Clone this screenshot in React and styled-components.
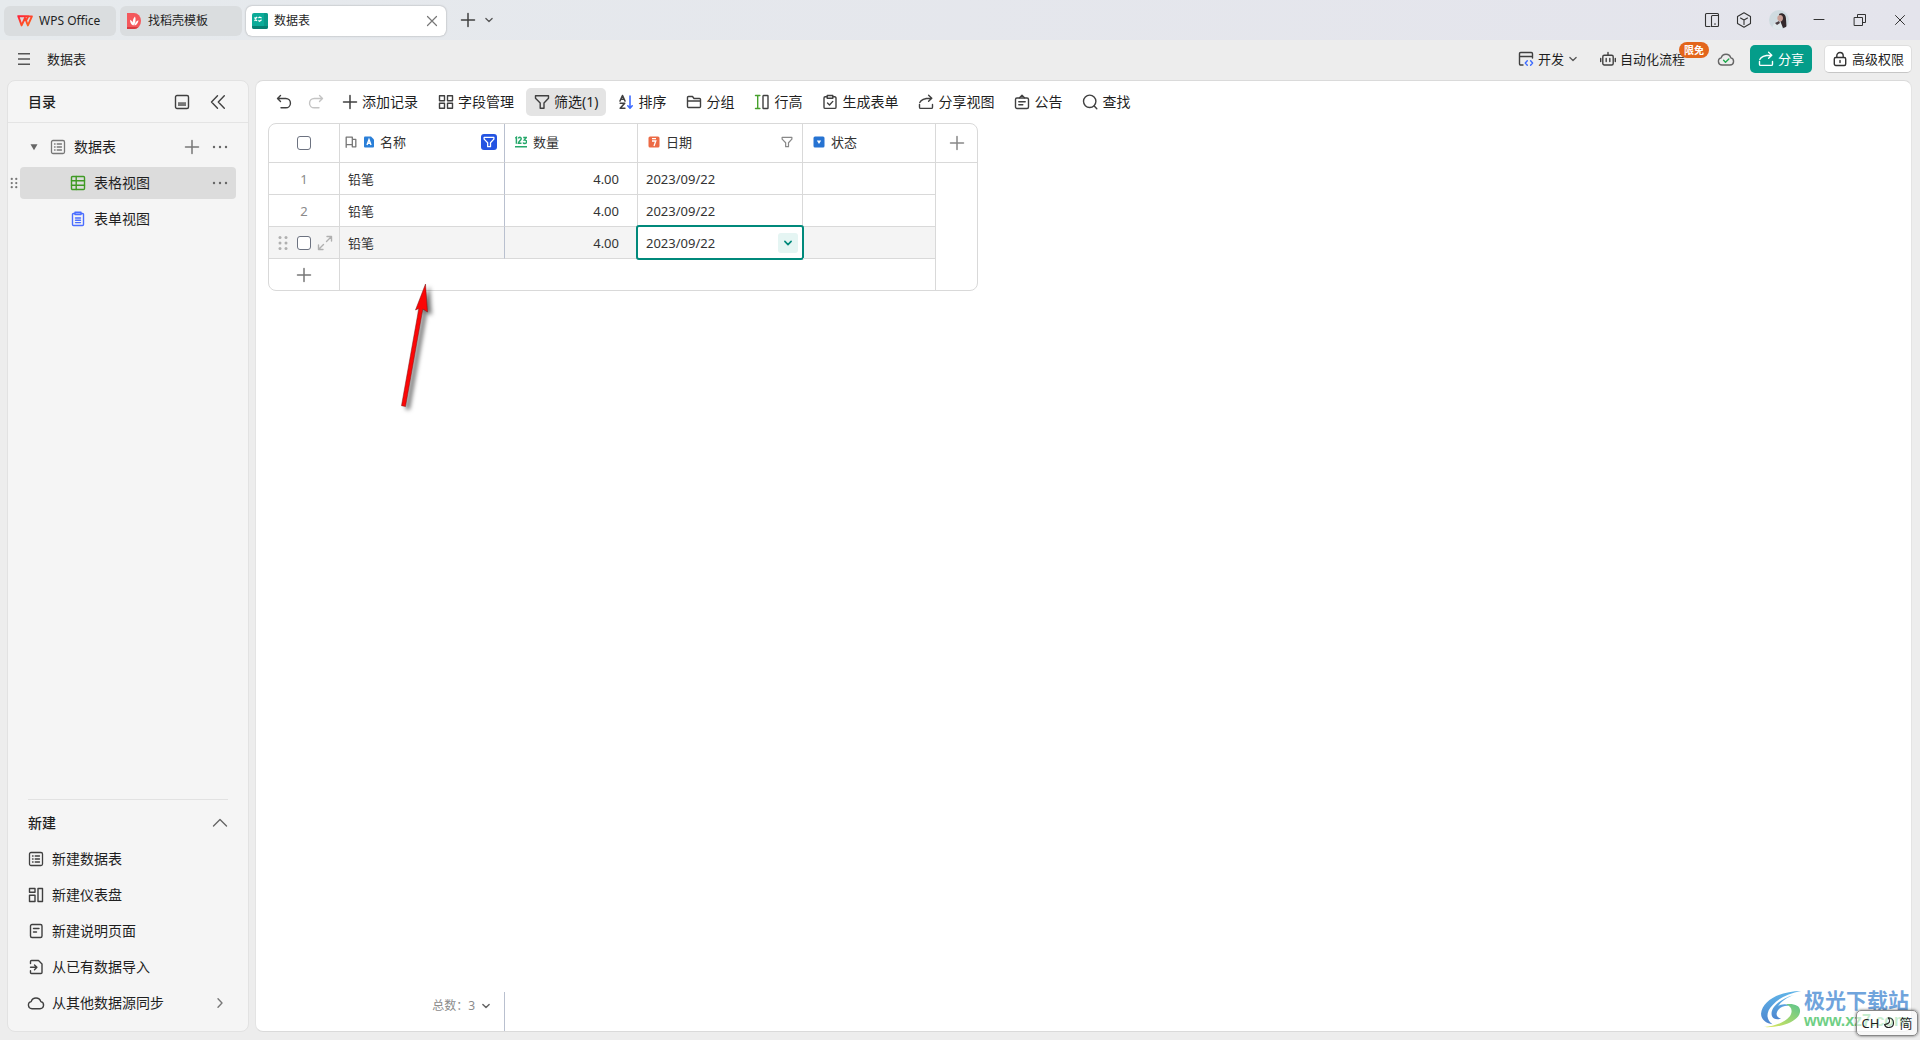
import React from "react";
import styled, { createGlobalStyle, css } from "styled-components";

const FONT = '"Noto Sans", "Noto Sans CJK SC", sans-serif';
const LINE = "#d9d9d9";
const TEAL = "#00897b";

const GlobalStyle = createGlobalStyle`
  *, *::before, *::after { box-sizing: border-box; }
  body {
    margin: 0;
    background: #ededed;
    color: #1f1f1f;
    font: 14px/20px ${FONT};
  }
  button {
    border: 0;
    padding: 0;
    background: none;
    color: inherit;
    font: inherit;
    cursor: pointer;
  }
`;

/* ---------- icons ---------- */

const Svg = styled.svg`
  display: block;
  flex: none;
  width: ${(p) => p.$size || 16}px;
  height: ${(p) => p.$size || 16}px;
  overflow: visible;
`;

const Icon = ({ size, width = 1.4, color = "currentColor", children }) => (
  <Svg
    $size={size}
    viewBox="0 0 16 16"
    fill="none"
    stroke={color}
    strokeWidth={width}
    strokeLinecap="round"
    strokeLinejoin="round"
    aria-hidden="true"
  >
    {children}
  </Svg>
);

const WpsLogo = () => (
  <Svg viewBox="0 0 16 16" fill="none" aria-hidden="true">
    <defs>
      <linearGradient id="wps" x1="0" y1="0" x2="1" y2="1">
        <stop offset="0" stopColor="#ff1f3a" />
        <stop offset="1" stopColor="#ff6a1a" />
      </linearGradient>
    </defs>
    <path
      d="M.4 3.2h11.8M1.4 3.4l3.2 9L8 5l2.9 7.4 4-9h-3.6L8.6 8.6"
      stroke="url(#wps)"
      strokeWidth="1.9"
      strokeLinejoin="round"
    />
  </Svg>
);

const DocerLogo = () => (
  <Svg viewBox="0 0 16 16" aria-hidden="true">
    <path d="M1 0h7a7 8 0 0 1 0 16H1z" fill="#f4585c" />
    <path d="M1 14h11.5A7 8 0 0 1 8 16H1z" fill="#d93a40" />
    <path d="M7.8 12.6C6 10 6.700 6 9 3.600c1 2.400.8 6.400-1.200 9zM7.200 12.600C4.800 11.500 3.900 9 4.200 6.800c2 .8 3.200 3.200 3 5.800zM8.400 12.600c.4-2.400 1.800-4.600 4-5.400 0 2.400-1.600 4.800-4 5.400z" fill="#fff" />
  </Svg>
);

const SheetLogo = () => (
  <Svg viewBox="0 0 16 16" aria-hidden="true">
    <rect width="16" height="16" rx="2" fill="#0bab98" />
    <path d="M0 13h16v1a2 2 0 0 1-2 2H2a2 2 0 0 1-2-2z" fill="#077f72" />
    <path d="M12 0h2a2 2 0 0 1 2 2v11h-4z" fill="#0a9a89" />
    <path d="M2.400 4.600l1.200.8 1.600-1.400M6.400 4.800l1.200-.6 2 .6M2.400 7.600l1.200-.6 1.600.6M6.400 7.400l1.200.8 2-1.400" stroke="#fff" strokeWidth="1.300" fill="none" />
  </Svg>
);

const Avatar = () => (
  <Svg $size={20} viewBox="0 0 20 20" aria-hidden="true">
    <clipPath id="avatar"><circle cx="10" cy="10" r="10" /></clipPath>
    <g clipPath="url(#avatar)">
      <rect width="20" height="20" fill="#cfdbe0" />
      <path d="M3 20c0-5 3-8 6-9l4 3v6z" fill="#dfe8eb" />
      <path d="M10 4c3-2 7 0 7 5l.5 8-3.500 1-2-5z" fill="#33292c" />
      <path d="M9 6c2-2 5-1 5 2s-2 4-4 3-2-4-1-5z" fill="#c99f95" />
      <path d="M6 13l4-2 1 2-3 2z" fill="#4a3f42" />
    </g>
  </Svg>
);

const Close = () => <Icon width={1} color="#333"><path d="M3.500 3.500l9 9M12.500 3.500l-9 9" /></Icon>;
const Plus = ({ color = "#404040" }) => <Icon width={1.500} color={color}><path d="M8 1.500v13M1.500 8h13" /></Icon>;
const ChevronDown = ({ size = 10, color = "#555", width = 2 }) => (
  <Icon size={size} width={width} color={color}><path d="M3 5.500L8 10.500l5-5" /></Icon>
);
const Dots = () => (
  <Svg viewBox="0 0 16 16" fill="#666" aria-hidden="true">
    <circle cx="2" cy="8" r="1.200" /><circle cx="8" cy="8" r="1.200" /><circle cx="14" cy="8" r="1.200" />
  </Svg>
);
const Grip = ({ color = "#777", size }) => (
  <Svg $size={size} viewBox="0 0 16 16" fill={color} aria-hidden="true">
    {[2.500, 8, 13.500].map((y) => (
      <g key={y}><circle cx="5" cy={y} r="1.500" /><circle cx="11" cy={y} r="1.500" /></g>
    ))}
  </Svg>
);
const Funnel = ({ color = "#404040", size, width = 1.400 }) => (
  <Icon size={size} width={width} color={color}>
    <path d="M1.500 1.800h13v2.400L10 9v5.200H6.200V9L1.500 4.200z" />
  </Icon>
);
const ListBox = ({ color = "#404040" }) => (
  <Icon width={1.300} color={color}>
    <rect x="1.500" y="1.500" width="13" height="13" rx="1.500" />
    <path d="M4.500 5h.6M4.500 8h.6M4.500 11h.6M7.200 5h4.300M7.200 8h4.300M7.200 11h4.300" />
  </Icon>
);
const ShareArrow = ({ color = "#404040" }) => (
  <Icon color={color}>
    <path d="M1.500 10.500v2.700c0 .7.500 1.200 1.200 1.200h10.600c.7 0 1.200-.5 1.200-1.200V10.500" />
    <path d="M1.800 8.500C3 5.500 6.500 4 13.500 4.200M10.600 1.200l3.200 3-3.200 3" />
  </Icon>
);

const Undo = () => <Icon color="#404040"><path d="M4.500 1.500L1.500 4.500l3 3M1.800 4.500h8a4.600 4.600 0 0 1 0 9.300H5" /></Icon>;
const Redo = () => <Icon color="#c4c4c4"><path d="M11.500 1.500l3 3-3 3M14.200 4.500h-8a4.600 4.600 0 0 0 0 9.300H11" /></Icon>;
const Fields = () => (
  <Icon color="#404040">
    <rect x="1.500" y="1.700" width="5" height="5" /><rect x="9.500" y="1.700" width="5" height="5" />
    <rect x="1.500" y="9.300" width="5" height="5" /><rect x="9.500" y="9.300" width="5" height="5" />
  </Icon>
);
const Sort = () => (
  <Icon color="#404040" width={1.600}>
    <path d="M2 7l2.500-5.500L7 7M2.900 5.200h3.200M2.200 9.200h4.500L2.200 14.200h4.700" />
    <path d="M12 2v12M9.800 11.800l2.200 2.400 2.200-2.400" stroke="#3d6bff" />
  </Icon>
);
const Folder = () => <Icon color="#404040"><path d="M1.500 12.500v-9c0-.6.400-1 1-1h4l1.500 2h5.500c.6 0 1 .4 1 1v7c0 .6-.4 1-1 1h-11c-.6 0-1-.4-1-1zM1.500 7h13" /></Icon>;
const RowHeight = () => (
  <Icon color="#404040">
    <path d="M1.500 1.500h4.400M3.700 1.500v13M1.500 14.500h4.400" stroke="#47a12c" />
    <rect x="9" y="1.500" width="5" height="13" rx=".5" />
  </Icon>
);
const FormIcon = () => (
  <Icon color="#404040">
    <path d="M5 2.800H3.200c-.7 0-1.200.5-1.200 1.200v9.200c0 .7.500 1.200 1.200 1.200h9.600c.7 0 1.200-.5 1.200-1.200V4c0-.7-.5-1.200-1.200-1.200H11" />
    <path d="M5.200 1.500h5.600v2.800H5.200zM5.500 9l2 2 3.300-3.600" />
  </Icon>
);
const Notice = () => (
  <Icon color="#404040">
    <rect x="1.500" y="4" width="13" height="10.500" rx="1.500" />
    <path d="M5.500 3.800L8 1.300l2.500 2.500M4.800 7.700h6.400M4.800 10.800h4" />
  </Icon>
);
const Search = () => <Icon color="#404040"><circle cx="7.700" cy="7.300" r="6.200" /><path d="M12.200 12l2.600 2.800" /></Icon>;

const FieldGlyph = styled.svg`
  display: block;
  flex: none;
  width: 12px;
  height: 12px;
`;

const TextFieldIcon = () => (
  <FieldGlyph viewBox="0 0 12 12" aria-hidden="true">
    <path d="M1 1.500Q1 .5 2 .5h6l3 3v7q0 1-1 1H2q-1 0-1-1z" fill="#2a7fd8" />
    <path d="M4 9l2-5.500L8 9M4.800 7.200h2.400" stroke="#fff" strokeWidth="1.400" fill="none" />
  </FieldGlyph>
);
const NumberFieldIcon = () => (
  <FieldGlyph viewBox="0 0 12 12" fill="none" stroke="#27a86b" strokeWidth="1.500" aria-hidden="true">
    <path d="M.2 2.200L1.400 1.300V7.800M3.400 2.500c.3-1.600 2.900-1.500 2.800.2C6.100 4.200 3.600 5.500 3.400 7.300h3.100M8.200 1.500h3L9.400 4c3-.2 2.700 3.500.4 3.500-.9 0-1.500-.4-1.700-1M0 10.700h12" />
  </FieldGlyph>
);
const DateFieldIcon = () => (
  <FieldGlyph viewBox="0 0 12 12" aria-hidden="true">
    <rect x=".5" y=".5" width="11" height="11" rx="1.500" fill="#ec6a45" />
    <path d="M4 2.700h4M4 5h3.800L6 10" stroke="#fff" strokeWidth="1.300" fill="none" />
  </FieldGlyph>
);
const SelectFieldIcon = () => (
  <FieldGlyph viewBox="0 0 12 12" aria-hidden="true">
    <rect x=".5" y=".5" width="11" height="11" rx="1.500" fill="#2673d2" />
    <path d="M3.800 4.500h4.400L6 8z" fill="#fff" />
  </FieldGlyph>
);

/* ---------- window frame ---------- */

const Shell = styled.div`
  display: flex;
  flex-direction: column;
  min-height: 100vh;
  overflow: hidden;
  position: relative;
`;

const TitleBar = styled.header`
  display: flex;
  align-items: center;
  height: 40px;
  padding-left: 4px;
  background: linear-gradient(90deg, #e6eaed, #e4e4ec);
`;

const Tab = styled.div`
  display: flex;
  align-items: center;
  width: ${(p) => p.$width}px;
  height: 30px;
  margin: 2px 4px 0 0;
  padding: 0 6px 0 ${(p) => p.$inset || 6}px;
  border-radius: 6px;
  background: #dadddf;
  font-size: 12px;
  ${(p) => p.$active && css`
    margin-right: 6px;
    background: #fff;
    box-shadow: 0 0 2px rgba(0, 0, 0, 0.35);
  `}
`;

const TabLabel = styled.button`
  display: flex;
  flex: 1;
  align-items: center;
  gap: 6px;
  height: 100%;
  white-space: nowrap;
`;

const IconButton = styled.button`
  display: flex;
  flex: none;
  align-items: center;
  justify-content: center;
  width: ${(p) => p.$width || 16}px;
  height: ${(p) => p.$height || 16}px;
`;

const WindowTools = styled.div`
  display: flex;
  align-items: center;
  margin-left: auto;
`;

const MenuBar = styled.nav`
  display: flex;
  align-items: center;
  gap: 12px;
  height: 40px;
  padding: 0 8px 2px 16px;
  font-size: 13px;
`;

const DocName = styled.span`
  flex: 1;
  padding-left: 3px;
`;

const MenuGroup = styled.div`
  display: flex;
  gap: 22px;
  padding-right: 17px;
`;

const MenuButton = styled.button`
  position: relative;
  display: flex;
  align-items: center;
  gap: 4px;
  height: 28px;
`;

const Badge = styled.span`
  position: absolute;
  top: -3px;
  right: -24px;
  padding: 0 5px;
  border-radius: 8px;
  background: #e3661b;
  color: #fff;
  font-size: 10px;
  font-weight: 700;
  line-height: 16px;
`;

const ShareButton = styled(MenuButton)`
  padding: 0 8px;
  border-radius: 5px;
  background: #049d8a;
  color: #fff;
`;

const PermissionButton = styled(MenuButton)`
  padding: 0 7px;
  border: 1px solid #dedede;
  border-bottom-color: #c6c6c6;
  border-radius: 5px;
  background: #fff;
`;

const Workspace = styled.div`
  display: flex;
  flex: 1;
  gap: 6px;
  padding: 0 8px 8px 7px;
`;

/* ---------- sidebar ---------- */

const Sidebar = styled.aside`
  display: flex;
  flex: none;
  flex-direction: column;
  width: 242px;
  border: 1px solid #e2e2e2;
  border-radius: 8px;
  background: #f5f5f5;
`;

const SidebarHeader = styled.div`
  display: flex;
  align-items: center;
  gap: 20px;
  height: 42px;
  padding: 0 22px 0 20px;
  border-bottom: 1px solid #e4e4e4;
`;

const Heading = styled.h2`
  flex: 1;
  margin: 0;
  font-size: 14px;
  font-weight: 500;
`;

const Tree = styled.div`
  display: flex;
  flex: 1;
  flex-direction: column;
  gap: 4px;
  padding: 8px 12px 0;
`;

const TreeRow = styled.div`
  position: relative;
  display: flex;
  align-items: center;
  gap: 12px;
  height: 32px;
  padding: 0 8px 0 ${(p) => (p.$nested ? 50 : 8)}px;
  border-radius: 4px;
  background: ${(p) => (p.$selected ? "#dcdcdc" : "transparent")};
`;

const TreeLabel = styled.button`
  display: flex;
  flex: 1;
  align-items: center;
  gap: 8px;
`;

const Caret = styled.span`
  display: flex;
  justify-content: center;
  width: 12px;
  margin-right: 2px;
`;

const RowGrip = styled.span`
  position: absolute;
  top: 10px;
  left: -12px;
`;

const CreatePanel = styled.section`
  margin: 0 20px 10px;
  padding-top: 5px;
  border-top: 1px solid #e2e2e2;
`;

const CreateRow = styled.div`
  display: flex;
  align-items: center;
  height: 36px;
`;

const CreateItem = styled.button`
  display: flex;
  align-items: center;
  gap: 8px;
  width: 100%;
  height: 36px;
  white-space: nowrap;
`;

const ItemText = styled.span`
  flex: 1;
  text-align: left;
`;

/* ---------- main panel ---------- */

const Panel = styled.main`
  display: flex;
  flex: 1;
  flex-direction: column;
  min-width: 0;
  border: 1px solid #dadada;
  border-left-color: #e4e4e4;
  border-right-color: #e4e4e4;
  border-radius: 8px;
  background: #fff;
`;

const Toolbar = styled.div`
  display: flex;
  align-items: center;
  gap: 4px;
  height: 42px;
  padding: 0 14px;
`;

const ToolButton = styled.button`
  display: flex;
  align-items: center;
  gap: 4px;
  height: 28px;
  padding: 0 ${(p) => (p.$compact ? 6 : 8)}px;
  border-radius: 5px;
  background: ${(p) => (p.$active ? "#e4e4e4" : "transparent")};
  white-space: nowrap;
`;

const GridFrame = styled.div`
  width: fit-content;
  margin-left: 12px;
  border: 1px solid ${LINE};
  border-radius: 8px;
`;

const Grid = styled.table`
  table-layout: fixed;
  width: 708px;
  border-spacing: 0;
  color: #333;
  font-size: 13px;
`;

const Col = styled.col`
  width: ${(p) => p.$width}px;
`;

const cell = css`
  position: relative;
  padding: 0 8px;
  border-right: ${(p) => (p.$last ? 0 : 1)}px solid ${(p) => (p.$frozen ? "#b9c0cf" : LINE)};
  border-bottom: ${(p) => (p.$flush ? 0 : 1)}px solid ${LINE};
  font-weight: 400;
  text-align: ${(p) => p.$align || "left"};
`;

const HeadCell = styled.th`
  ${cell}
  height: 39px;
`;

const Cell = styled.td`
  ${cell}
  height: ${(p) => (p.$flush ? 31 : 32)}px;
`;

const NumberCell = styled(Cell)`
  padding-right: 18px;
`;

const IndexCell = styled(Cell)`
  color: #8a8a8a;
`;

const Row = styled.tr`
  background: ${(p) => (p.$hover ? "#f4f4f4" : "transparent")};
`;

const FieldHead = styled.div`
  display: flex;
  align-items: center;
  gap: ${(p) => (p.$primary ? 5 : 6)}px;
  margin: 0 -1px 0 ${(p) => (p.$primary ? -4 : 2)}px;
  padding-bottom: 2px;
`;

const FieldName = styled.span`
  flex: 1;
`;

const FilterTag = styled(IconButton)`
  border-radius: 3px;
  background: #2454e2;
`;

const Check = styled.input`
  appearance: none;
  display: block;
  flex: none;
  width: 14px;
  height: 14px;
  margin: 0;
  border: 1px solid #6c7280;
  border-radius: 3px;
  background: #fff;
`;

const Centered = styled.div`
  display: flex;
  align-items: center;
  justify-content: center;
  gap: 6px;
  margin: 0 -8px;
`;

const ActiveBox = styled.div`
  position: absolute;
  inset: -2px;
  display: flex;
  align-items: center;
  justify-content: space-between;
  padding: 0 4px 0 8px;
  border: 2px solid ${TEAL};
  border-radius: 3px;
  background: #fff;
`;

const DropButton = styled(IconButton)`
  border-radius: 3px;
  background: #e5f5f3;
`;

const Footer = styled.footer`
  display: flex;
  height: 39px;
  margin-top: auto;
`;

const Total = styled.button`
  display: flex;
  align-items: center;
  justify-content: flex-end;
  gap: 6px;
  width: 249px;
  padding: 0 13px 12px 0;
  border-right: 1px solid #b9c0cf;
  color: #8c8c8c;
  font-size: 12px;
`;

/* ---------- overlays ---------- */

const Pointer = styled.svg`
  position: absolute;
  top: 280px;
  left: 396px;
  width: 40px;
  height: 136px;
  filter: drop-shadow(4px 3px 2px rgba(0, 0, 0, 0.55));
  pointer-events: none;
`;

const Watermark = styled.div`
  position: absolute;
  right: 11px;
  bottom: 9px;
  display: flex;
  align-items: center;
`;

const WatermarkMark = styled.svg`
  width: 44px;
  height: 40px;
`;

const WatermarkText = styled.div`
  display: flex;
  flex-direction: column;
  color: #70a4dc;
  font-family: "Noto Sans CJK SC", sans-serif;
  font-size: 21px;
  font-weight: 700;
  line-height: 24px;
`;

const WatermarkUrl = styled.span`
  color: #6fcf85;
  font: 700 16px/20px "Liberation Sans", sans-serif;
`;

const InputMode = styled.div`
  position: absolute;
  right: 2px;
  bottom: 4px;
  display: flex;
  align-items: center;
  justify-content: center;
  gap: 4px;
  width: 62px;
  height: 26px;
  border: 1px solid #888;
  border-radius: 5px;
  background: rgba(255, 255, 255, 0.6);
  box-shadow: 0 0 3px rgba(0, 0, 0, 0.6);
  font-size: 13px;
`;

/* ---------- content ---------- */

const records = [
  { id: 1, name: "铅笔", amount: "4.00", date: "2023/09/22" },
  { id: 2, name: "铅笔", amount: "4.00", date: "2023/09/22" },
];

const createItems = [
  { label: "新建数据表", icon: <ListBox color="#404040" /> },
  {
    label: "新建仪表盘",
    icon: (
      <Icon color="#404040">
        <rect x="1.500" y="1.500" width="5.500" height="3.800" /><rect x="1.500" y="8.300" width="5.500" height="6.200" />
        <rect x="10" y="1.500" width="4.500" height="13" />
      </Icon>
    ),
  },
  {
    label: "新建说明页面",
    icon: <Icon color="#404040"><rect x="2.500" y="1.500" width="11.500" height="13" rx="1.500" /><path d="M5.500 5.500h5.500M5.500 9h3" /></Icon>,
  },
  {
    label: "从已有数据导入",
    icon: (
      <Icon color="#404040">
        <path d="M2.500 4.500v-2c0-.6.400-1 1-1h7L14 5v8.500c0 .6-.4 1-1 1H3.500c-.6 0-1-.4-1-1v-1.800" />
        <path d="M2.500 8.300h6.200M6.500 5.900l2.400 2.400-2.400 2.400" />
      </Icon>
    ),
  },
  {
    label: "从其他数据源同步",
    icon: <Icon color="#404040"><path d="M4 13.700a3.600 3.600 0 0 1-.8-7.100 5 5 0 0 1 9.600 0 3.600 3.600 0 0 1-.8 7.100z" /></Icon>,
    more: true,
  },
];

const tools = [
  { label: "添加记录", icon: <Plus /> },
  { label: "字段管理", icon: <Fields /> },
  { label: "筛选(1)", icon: <Funnel />, active: true },
  { label: "排序", icon: <Sort /> },
  { label: "分组", icon: <Folder /> },
  { label: "行高", icon: <RowHeight /> },
  { label: "生成表单", icon: <FormIcon /> },
  { label: "分享视图", icon: <ShareArrow /> },
  { label: "公告", icon: <Notice /> },
  { label: "查找", icon: <Search /> },
];

const WindowHeader = () => (
  <TitleBar>
    <Tab $width={112} $inset={13}><TabLabel><WpsLogo />WPS Office</TabLabel></Tab>
    <Tab $width={122}><TabLabel><DocerLogo />找稻壳模板</TabLabel></Tab>
    <Tab $width={200} $active>
      <TabLabel><SheetLogo />数据表</TabLabel>
      <IconButton aria-label="关闭标签"><Icon width={1.200} color="#777"><path d="M3.500 3.500l9 9M12.500 3.500l-9 9" /></Icon></IconButton>
    </Tab>
    <IconButton $width={32} aria-label="新标签"><Plus /></IconButton>
    <IconButton $width={10} aria-label="标签列表"><ChevronDown /></IconButton>
    <WindowTools>
      <IconButton $width={32} aria-label="侧边窗格">
        <Icon width={1.100} color="#333"><path d="M6 14.500H2.500c-.6 0-1-.4-1-1v-11c0-.6.400-1 1-1h11c.6 0 1 .4 1 1v11c0 .6-.4 1-1 1H7.500V4.500c0-.6.400-1 1-1h6M10.500 12h1" /></Icon>
      </IconButton>
      <IconButton $width={32} aria-label="应用">
        <Icon width={1.100} color="#333"><path d="M8 .8l6.500 3.600v7.200L8 15.200l-6.500-3.600V4.400zM8 8v4.500M8 8L4.500 6M8 8l3.500-2" /></Icon>
      </IconButton>
      <IconButton $width={38} $height={20} aria-label="账户"><Avatar /></IconButton>
    </WindowTools>
    <IconButton $width={42} aria-label="最小化"><Icon width={1} color="#333"><path d="M3 7.500h10" /></Icon></IconButton>
    <IconButton $width={40} aria-label="还原">
      <Icon width={1} color="#333"><path d="M2.500 5.500h8v8h-8zM5.500 5.500v-3h8v8h-3" /></Icon>
    </IconButton>
    <IconButton $width={40} aria-label="关闭"><Close /></IconButton>
  </TitleBar>
);

const DocumentBar = () => (
  <MenuBar>
    <IconButton aria-label="菜单">
      <Icon width={1.600} color="#555"><path d="M2 2.700h12M2 8h12M2 13.300h12" strokeLinecap="butt" /></Icon>
    </IconButton>
    <DocName>数据表</DocName>
    <MenuGroup>
      <MenuButton>
        <Icon color="#404040">
          <path d="M5 14H2.700c-.7 0-1.200-.5-1.200-1.200V2.700c0-.7.500-1.200 1.200-1.200h10.600c.7 0 1.200.5 1.200 1.200V7M1.500 5.500h13" />
          <path d="M9.300 9.700L7.300 12l2 2.300M12.600 9.700l2 2.300-2 2.300" stroke="#3d6bff" />
        </Icon>
        开发
        <ChevronDown />
      </MenuButton>
      <MenuButton>
        <Icon color="#404040">
          <rect x="2.800" y="4.300" width="10.400" height="9.700" rx="1.500" /><path d="M8 1.500v2.500M.7 7.500v3M15.300 7.500v3M6.200 7.500v3M9.800 7.500v3" />
        </Icon>
        自动化流程
        <Badge>限免</Badge>
      </MenuButton>
    </MenuGroup>
    <IconButton $width={24} aria-label="已同步">
      <Icon color="#666"><path d="M4 14a3.600 3.600 0 0 1-.8-7.100 5 5 0 0 1 9.600 0A3.600 3.600 0 0 1 12 14z" /><path d="M5.600 9.300l1.900 1.900 3.300-3.200" stroke="#1fa84c" /></Icon>
    </IconButton>
    <ShareButton><ShareArrow color="#fff" />分享</ShareButton>
    <PermissionButton>
      <Icon color="#333"><rect x="2.300" y="6.500" width="11.400" height="8" rx="1.500" /><path d="M4.800 6.300V4.700a3.200 3.200 0 0 1 6.400 0v1.600M8 9.500v2" /></Icon>
      高级权限
    </PermissionButton>
  </MenuBar>
);

const Directory = () => (
  <Sidebar>
    <SidebarHeader>
      <Heading>目录</Heading>
      <IconButton aria-label="底部面板">
        <Icon color="#404040"><rect x="1.500" y="1.500" width="13" height="13" rx="1.500" /><path d="M4 8.200h8v3.800H4z" fill="#777" stroke="none" /></Icon>
      </IconButton>
      <IconButton aria-label="收起"><Icon color="#404040"><path d="M7.500 1.800L1.500 8l6 6.200M14.300 1.800L8.300 8l6 6.200" /></Icon></IconButton>
    </SidebarHeader>
    <Tree>
      <TreeRow>
        <TreeLabel>
          <Caret><Svg $size={8} viewBox="0 0 8 8" aria-hidden="true"><path d="M.5 1.200h7L4 7.200z" fill="#666" /></Svg></Caret>
          <ListBox color="#777" />
          数据表
        </TreeLabel>
        <IconButton aria-label="添加视图"><Plus color="#777" /></IconButton>
        <IconButton aria-label="更多"><Dots /></IconButton>
      </TreeRow>
      <TreeRow $nested $selected>
        <RowGrip><Grip size={12} /></RowGrip>
        <TreeLabel>
          <Icon color="#3f9a24"><rect x="1.500" y="1.500" width="13" height="13" rx="1" /><path d="M1.500 5.800h13M1.500 10.200h13M6.200 1.500v13" /></Icon>
          表格视图
        </TreeLabel>
        <IconButton aria-label="更多"><Dots /></IconButton>
      </TreeRow>
      <TreeRow $nested>
        <TreeLabel>
          <Icon color="#4a6dff"><path d="M5 2.500H3.500q-1 0-1 1v10q0 1 1 1h9q1 0 1-1v-10q0-1-1-1H11" /><path d="M5 1.200h6v2.400H5z" fill="#8ea5ff" /><path d="M5.500 7h5M5.500 9.300h5M5.500 11.600h5" /></Icon>
          表单视图
        </TreeLabel>
      </TreeRow>
    </Tree>
    <CreatePanel>
      <CreateRow>
        <Heading>新建</Heading>
        <IconButton aria-label="收起新建"><Icon color="#666"><path d="M1.500 11L8 4.500l6.500 6.500" /></Icon></IconButton>
      </CreateRow>
      {createItems.map((item) => (
        <CreateItem key={item.label}>
          {item.icon}
          <ItemText>{item.label}</ItemText>
          {item.more && <Icon color="#777"><path d="M6 3.800L10 8l-4 4.200" /></Icon>}
        </CreateItem>
      ))}
    </CreatePanel>
  </Sidebar>
);

const DataGrid = () => (
  <GridFrame>
    <Grid>
      <colgroup>
        {[71, 165, 133, 165, 133, 41].map((w, i) => <Col key={i} $width={w} />)}
      </colgroup>
      <thead>
        <tr>
          <HeadCell><Centered><Check type="checkbox" aria-label="全选" /></Centered></HeadCell>
          <HeadCell $frozen>
            <FieldHead $primary>
              <Icon size={14} width={1.500} color="#777"><path d="M2.500 14V2.500h7V11h-7M9.500 5h4v8.500h-4V11" /></Icon>
              <TextFieldIcon />
              <FieldName>名称</FieldName>
              <FilterTag aria-label="名称筛选"><Funnel color="#fff" size={12} width={1.700} /></FilterTag>
            </FieldHead>
          </HeadCell>
          <HeadCell><FieldHead><NumberFieldIcon /><FieldName>数量</FieldName></FieldHead></HeadCell>
          <HeadCell>
            <FieldHead>
              <DateFieldIcon /><FieldName>日期</FieldName>
              <IconButton aria-label="日期筛选"><Funnel color="#888" size={12} width={1.600} /></IconButton>
            </FieldHead>
          </HeadCell>
          <HeadCell><FieldHead><SelectFieldIcon /><FieldName>状态</FieldName></FieldHead></HeadCell>
          <HeadCell $last><Centered><IconButton aria-label="添加字段"><Plus color="#888" /></IconButton></Centered></HeadCell>
        </tr>
      </thead>
      <tbody>
        {records.map((r, i) => (
          <Row key={r.id}>
            <IndexCell $align="center">{r.id}</IndexCell>
            <Cell $frozen>{r.name}</Cell>
            <NumberCell $align="right">{r.amount}</NumberCell>
            <Cell>{r.date}</Cell>
            <Cell />
            {i === 0 && <Cell rowSpan={4} $last $flush />}
          </Row>
        ))}
        <Row $hover>
          <IndexCell>
            <Centered>
              <Grip color="#b0b0b0" />
              <Check type="checkbox" aria-label="选择记录" />
              <IconButton aria-label="展开记录">
                <Icon color="#b0b0b0"><path d="M9.500 6.500l5-5M10 1.500h4.500V6M6.500 9.500l-5 5M1.500 10v4.500H6" /></Icon>
              </IconButton>
            </Centered>
          </IndexCell>
          <Cell $frozen>铅笔</Cell>
          <NumberCell $align="right">4.00</NumberCell>
          <Cell>
            <ActiveBox>
              2023/09/22
              <DropButton $width={20} $height={20} aria-label="选择日期"><ChevronDown color={TEAL} width={2.600} size={10} /></DropButton>
            </ActiveBox>
          </Cell>
          <Cell />
        </Row>
        <Row>
          <Cell $flush><Centered><IconButton aria-label="添加记录"><Plus color="#777" /></IconButton></Centered></Cell>
          <Cell $flush colSpan={4} />
        </Row>
      </tbody>
    </Grid>
  </GridFrame>
);

export default function App() {
  return (
    <>
      <GlobalStyle />
      <Shell>
        <WindowHeader />
        <DocumentBar />
        <Workspace>
          <Directory />
          <Panel>
            <Toolbar>
              <ToolButton $compact aria-label="撤销"><Undo /></ToolButton>
              <ToolButton $compact aria-label="重做"><Redo /></ToolButton>
              {tools.map((t) => (
                <ToolButton key={t.label} $active={t.active}>{t.icon}{t.label}</ToolButton>
              ))}
            </Toolbar>
            <DataGrid />
            <Footer>
              <Total>总数：3<ChevronDown color="#666" width={2.400} /></Total>
            </Footer>
          </Panel>
        </Workspace>
        <Pointer viewBox="0 0 40 136" aria-hidden="true">
          <path d="M29.500 4L31.500 32l-4.700-3L9.500 126.500l-4-.8L22.800 28.500 19.500 30z" fill="#fb0606" stroke="#7a1010" strokeWidth=".5" />
        </Pointer>
        <Watermark>
          <WatermarkMark viewBox="0 0 46 42" aria-hidden="true">
            <defs>
              <linearGradient id="swirl" x1="0" y1="0" x2="0" y2="1">
                <stop offset="0" stopColor="#5fb4e8" />
                <stop offset="1" stopColor="#4f86cf" />
              </linearGradient>
              <linearGradient id="leaf" x1="1" y1="0" x2="0" y2="1">
                <stop offset="0" stopColor="#5cc48c" />
                <stop offset="1" stopColor="#e0e85a" />
              </linearGradient>
            </defs>
            <path d="M43 2C22 2 2 12 1 26c0 6 5 10 12 11C6 32 6 24 13 17 20 9 31 4 43 2z" fill="url(#swirl)" />
            <path d="M36 6C22 10 12 18 12 26c0 5 5 7 10 5-5-1-6-5-3-9s9-5 12-4c-4-3-9-2-12 0 3-5 9-9 17-12z" fill="url(#swirl)" />
            <path d="M27 16c8-1 15 1 15 7 0 9-16 18-38 17 12-1 22-5 27-11 4-6 2-11-4-13z" fill="url(#leaf)" />
          </WatermarkMark>
          <WatermarkText>极光下载站<WatermarkUrl>www.xz7.com</WatermarkUrl></WatermarkText>
        </Watermark>
        <InputMode>
          CH
          <Icon size={12} width={1.500} color="#222"><path d="M7 1c3 3 3 8-5 9 2 6 12 5 12-2 0-4-3-7-7-7z" /></Icon>
          简
        </InputMode>
      </Shell>
    </>
  );
}
